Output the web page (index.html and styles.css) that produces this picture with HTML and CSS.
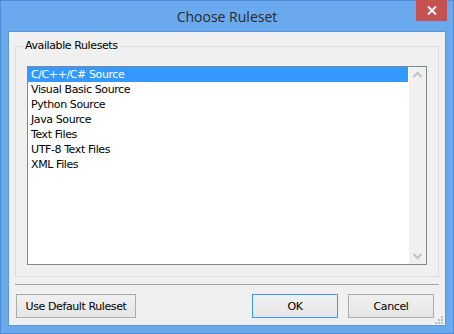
FILE: index.html
```html
<!DOCTYPE html>
<html lang="en">
<head>
  <meta charset="UTF-8" />
  <title>Choose Ruleset</title>
  <link rel="stylesheet" href="styles.css">
</head>
<body>
  <div class="window">
    <div class="titlebar">
      <span class="title">Choose Ruleset</span>
      <div class="close-button">
        <svg width="10" height="9" viewBox="0 0 10 9"><path d="M1 0.5 L9 8.5 M9 0.5 L1 8.5" stroke="#fff" stroke-width="2" fill="none"/></svg>
      </div>
    </div>
    <div class="client">
      <fieldset class="group">
        <legend>Available Rulesets</legend>
        <div class="listbox">
          <ul class="items">
            <li class="selected">C/C++/C# Source</li>
            <li>Visual Basic Source</li>
            <li>Python Source</li>
            <li>Java Source</li>
            <li>Text Files</li>
            <li>UTF-8 Text Files</li>
            <li>XML Files</li>
          </ul>
          <div class="scrollbar">
            <svg width="17" height="17" viewBox="0 0 17 17"><path d="M4.5 10 L8.5 6 L12.5 10" stroke="#c2c2c2" stroke-width="2" fill="none"/></svg>
            <svg width="17" height="17" viewBox="0 0 17 17"><path d="M4.5 7 L8.5 11 L12.5 7" stroke="#c2c2c2" stroke-width="2" fill="none"/></svg>
          </div>
        </div>
      </fieldset>
      <div class="separator"></div>
      <div class="buttons">
        <button class="btn wide">Use Default Ruleset</button>
        <div class="spacer"></div>
        <button class="btn default">OK</button>
        <button class="btn">Cancel</button>
      </div>
      <svg class="grip" width="10" height="10" viewBox="0 0 10 10">
        <rect x="7" y="1" width="2" height="2" fill="#bcbcbc"/>
        <rect x="4" y="4" width="2" height="2" fill="#bcbcbc"/>
        <rect x="7" y="4" width="2" height="2" fill="#bcbcbc"/>
        <rect x="1" y="7" width="2" height="2" fill="#bcbcbc"/>
        <rect x="4" y="7" width="2" height="2" fill="#bcbcbc"/>
        <rect x="7" y="7" width="2" height="2" fill="#bcbcbc"/>
      </svg>
    </div>
  </div>
</body>
</html>
```

FILE: styles.css
```css
body {
  margin: 0;
  padding: 0;
  background: #ffffff;
  font-family: 'DejaVu Sans', sans-serif;
}
.window {
  width: 454px;
  height: 334px;
  box-sizing: border-box;
  border: 1px solid #4f8ad4;
  background-color: #6ba9ef;
  padding: 0 7px 7px;
  display: flex;
  flex-direction: column;
}
.titlebar {
  height: 30px;
  position: relative;
  display: flex;
  align-items: center;
  justify-content: center;
}
.title {
  font-family: 'Open Sans', sans-serif;
  font-size: 14px;
  color: #2a2a2a;
  margin-top: 1px;
}
.close-button {
  position: absolute;
  top: -1px;
  right: -1px;
  width: 31px;
  height: 21px;
  background-color: #c75050;
  display: flex;
  align-items: center;
  justify-content: center;
}
.client {
  flex: 1;
  position: relative;
  background-color: #f0f0f0;
  border: 1px solid #5d95d8;
  display: flex;
  flex-direction: column;
  font-size: 11px;
  letter-spacing: -0.4px;
  color: #000000;
}
.group {
  margin: 7px 6px 0;
  padding: 0 11px 11px;
  border: 1px solid #dcdcdc;
  min-width: 0;
}
.group legend {
  padding: 0 2px;
  margin-left: -4px;
  line-height: 14px;
  height: 14px;
  font-size: 11px;
}
.listbox {
  margin-top: 13px;
  height: 199px;
  box-sizing: border-box;
  border: 1px solid #828790;
  background: #ffffff;
  display: flex;
}
.items {
  list-style: none;
  margin: 0;
  padding: 0;
  flex: 1;
}
.items li {
  height: 15px;
  line-height: 16px;
  padding-left: 3px;
  white-space: nowrap;
}
.items li.selected {
  background-color: #3399ff;
  color: #ffffff;
  margin-right: 1px;
}
.scrollbar {
  width: 17px;
  background: #f0f0f0;
  display: flex;
  flex-direction: column;
  justify-content: space-between;
}
.scrollbar svg {
  display: block;
}
.separator {
  margin: 7px 6px 0;
  height: 1px;
  background: #a0a0a0;
}
.buttons {
  display: flex;
  gap: 10px;
  margin-top: 9px;
  padding: 0 11px 0 7px;
}
.spacer {
  flex: 1;
}
.btn {
  width: 86px;
  height: 24px;
  box-sizing: border-box;
  border: 1px solid #acacac;
  background: linear-gradient(#f0f0f0, #e5e5e5);
  font-family: 'DejaVu Sans', sans-serif;
  font-size: 11px;
  letter-spacing: -0.4px;
  color: #000000;
  padding: 0;
}
.btn.wide {
  width: 120px;
}
.btn.default {
  border-color: #3399ff;
}
.grip {
  position: absolute;
  right: 1px;
  bottom: 0;
}
```
